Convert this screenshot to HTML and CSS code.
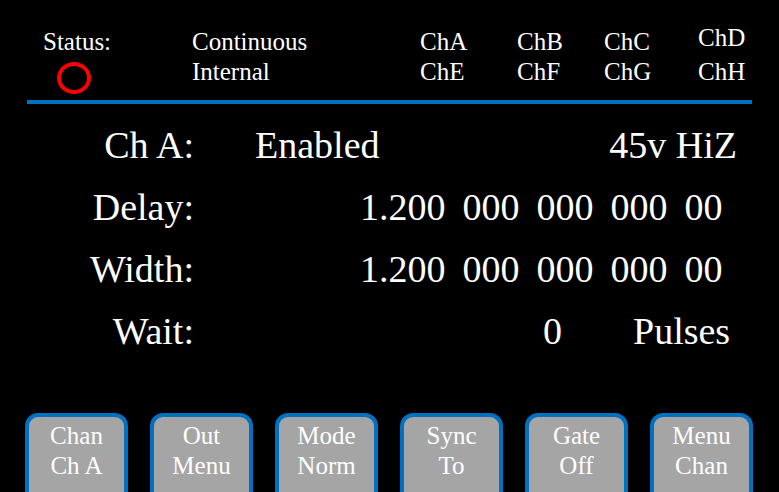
FILE: index.html
```html
<!DOCTYPE html>
<html>
<head>
<meta charset="utf-8">
<link rel="stylesheet" href="styles.css">
</head>
<body>
<div class="screen">
  <div class="header">
    <div class="cell">Status:</div>
    <div class="cell">Continuous</div>
    <div class="cell">ChA</div>
    <div class="cell">ChB</div>
    <div class="cell">ChC</div>
    <div class="cell raised">ChD</div>
    <div class="cell"><div class="status-ring"></div></div>
    <div class="cell">Internal</div>
    <div class="cell">ChE</div>
    <div class="cell">ChF</div>
    <div class="cell">ChG</div>
    <div class="cell">ChH</div>
  </div>
  <div class="rule"></div>
  <div class="main">
    <div class="row">
      <div class="label">Ch A:</div>
      <div class="enabled">Enabled</div>
      <div class="mode">45v HiZ</div>
    </div>
    <div class="row">
      <div class="label">Delay:</div>
      <div class="number">1.200  000  000  000  00</div>
    </div>
    <div class="row">
      <div class="label">Width:</div>
      <div class="number">1.200  000  000  000  00</div>
    </div>
    <div class="row">
      <div class="label">Wait:</div>
      <div class="count">0</div>
      <div class="unit">Pulses</div>
    </div>
  </div>
  <div class="buttons">
    <div class="btn">Chan<br>Ch A</div>
    <div class="btn">Out<br>Menu</div>
    <div class="btn">Mode<br>Norm</div>
    <div class="btn">Sync<br>To</div>
    <div class="btn">Gate<br>Off</div>
    <div class="btn">Menu<br>Chan</div>
  </div>
</div>
</body>
</html>
```

FILE: styles.css
```css
html, body {
  margin: 0;
  padding: 0;
  background: #000;
}
body {
  width: 779px;
  height: 492px;
  overflow: hidden;
  color: #fff;
}
.screen {
  width: 779px;
  height: 492px;
  overflow: hidden;
  font-family: "Liberation Serif", "Times New Roman", serif;
}
.header {
  display: grid;
  grid-template-columns: 149px 228px 97px 87px 94px 60px;
  grid-template-rows: 30px 30px;
  padding: 27px 0 0 43px;
  font-size: 25px;
  line-height: 30px;
}
.cell {
  white-space: nowrap;
}
.raised {
  margin-top: -4px;
}
.status-ring {
  box-sizing: border-box;
  width: 34px;
  height: 32px;
  margin: 5px 0 0 14px;
  border: 4px solid #ff0000;
  border-radius: 50%;
}
.rule {
  height: 4px;
  margin: 13px 0 0 27px;
  width: 725px;
  background: #0070c0;
}
.main {
  padding-top: 10px;
  width: 737px;
  font-size: 38px;
  line-height: 62px;
}
.row {
  display: flex;
  height: 62px;
  white-space: pre;
}
.label {
  width: 194px;
  text-align: right;
  flex: none;
}
.enabled {
  margin-left: 61px;
}
.mode {
  margin-left: auto;
}
.number {
  margin-left: 166px;
  word-spacing: -1px;
}
.count {
  margin-left: 349px;
}
.unit {
  margin-left: 71px;
}
.buttons {
  display: flex;
  gap: 22px;
  margin-top: 51px;
  padding-left: 25px;
}
.btn {
  box-sizing: border-box;
  flex: none;
  width: 103px;
  height: 94px;
  border: 4px solid #0070c0;
  border-radius: 13px;
  background: #a5a5a5;
  color: #fff;
  text-align: center;
  font-size: 25px;
  line-height: 30px;
  padding-top: 4px;
}
```
